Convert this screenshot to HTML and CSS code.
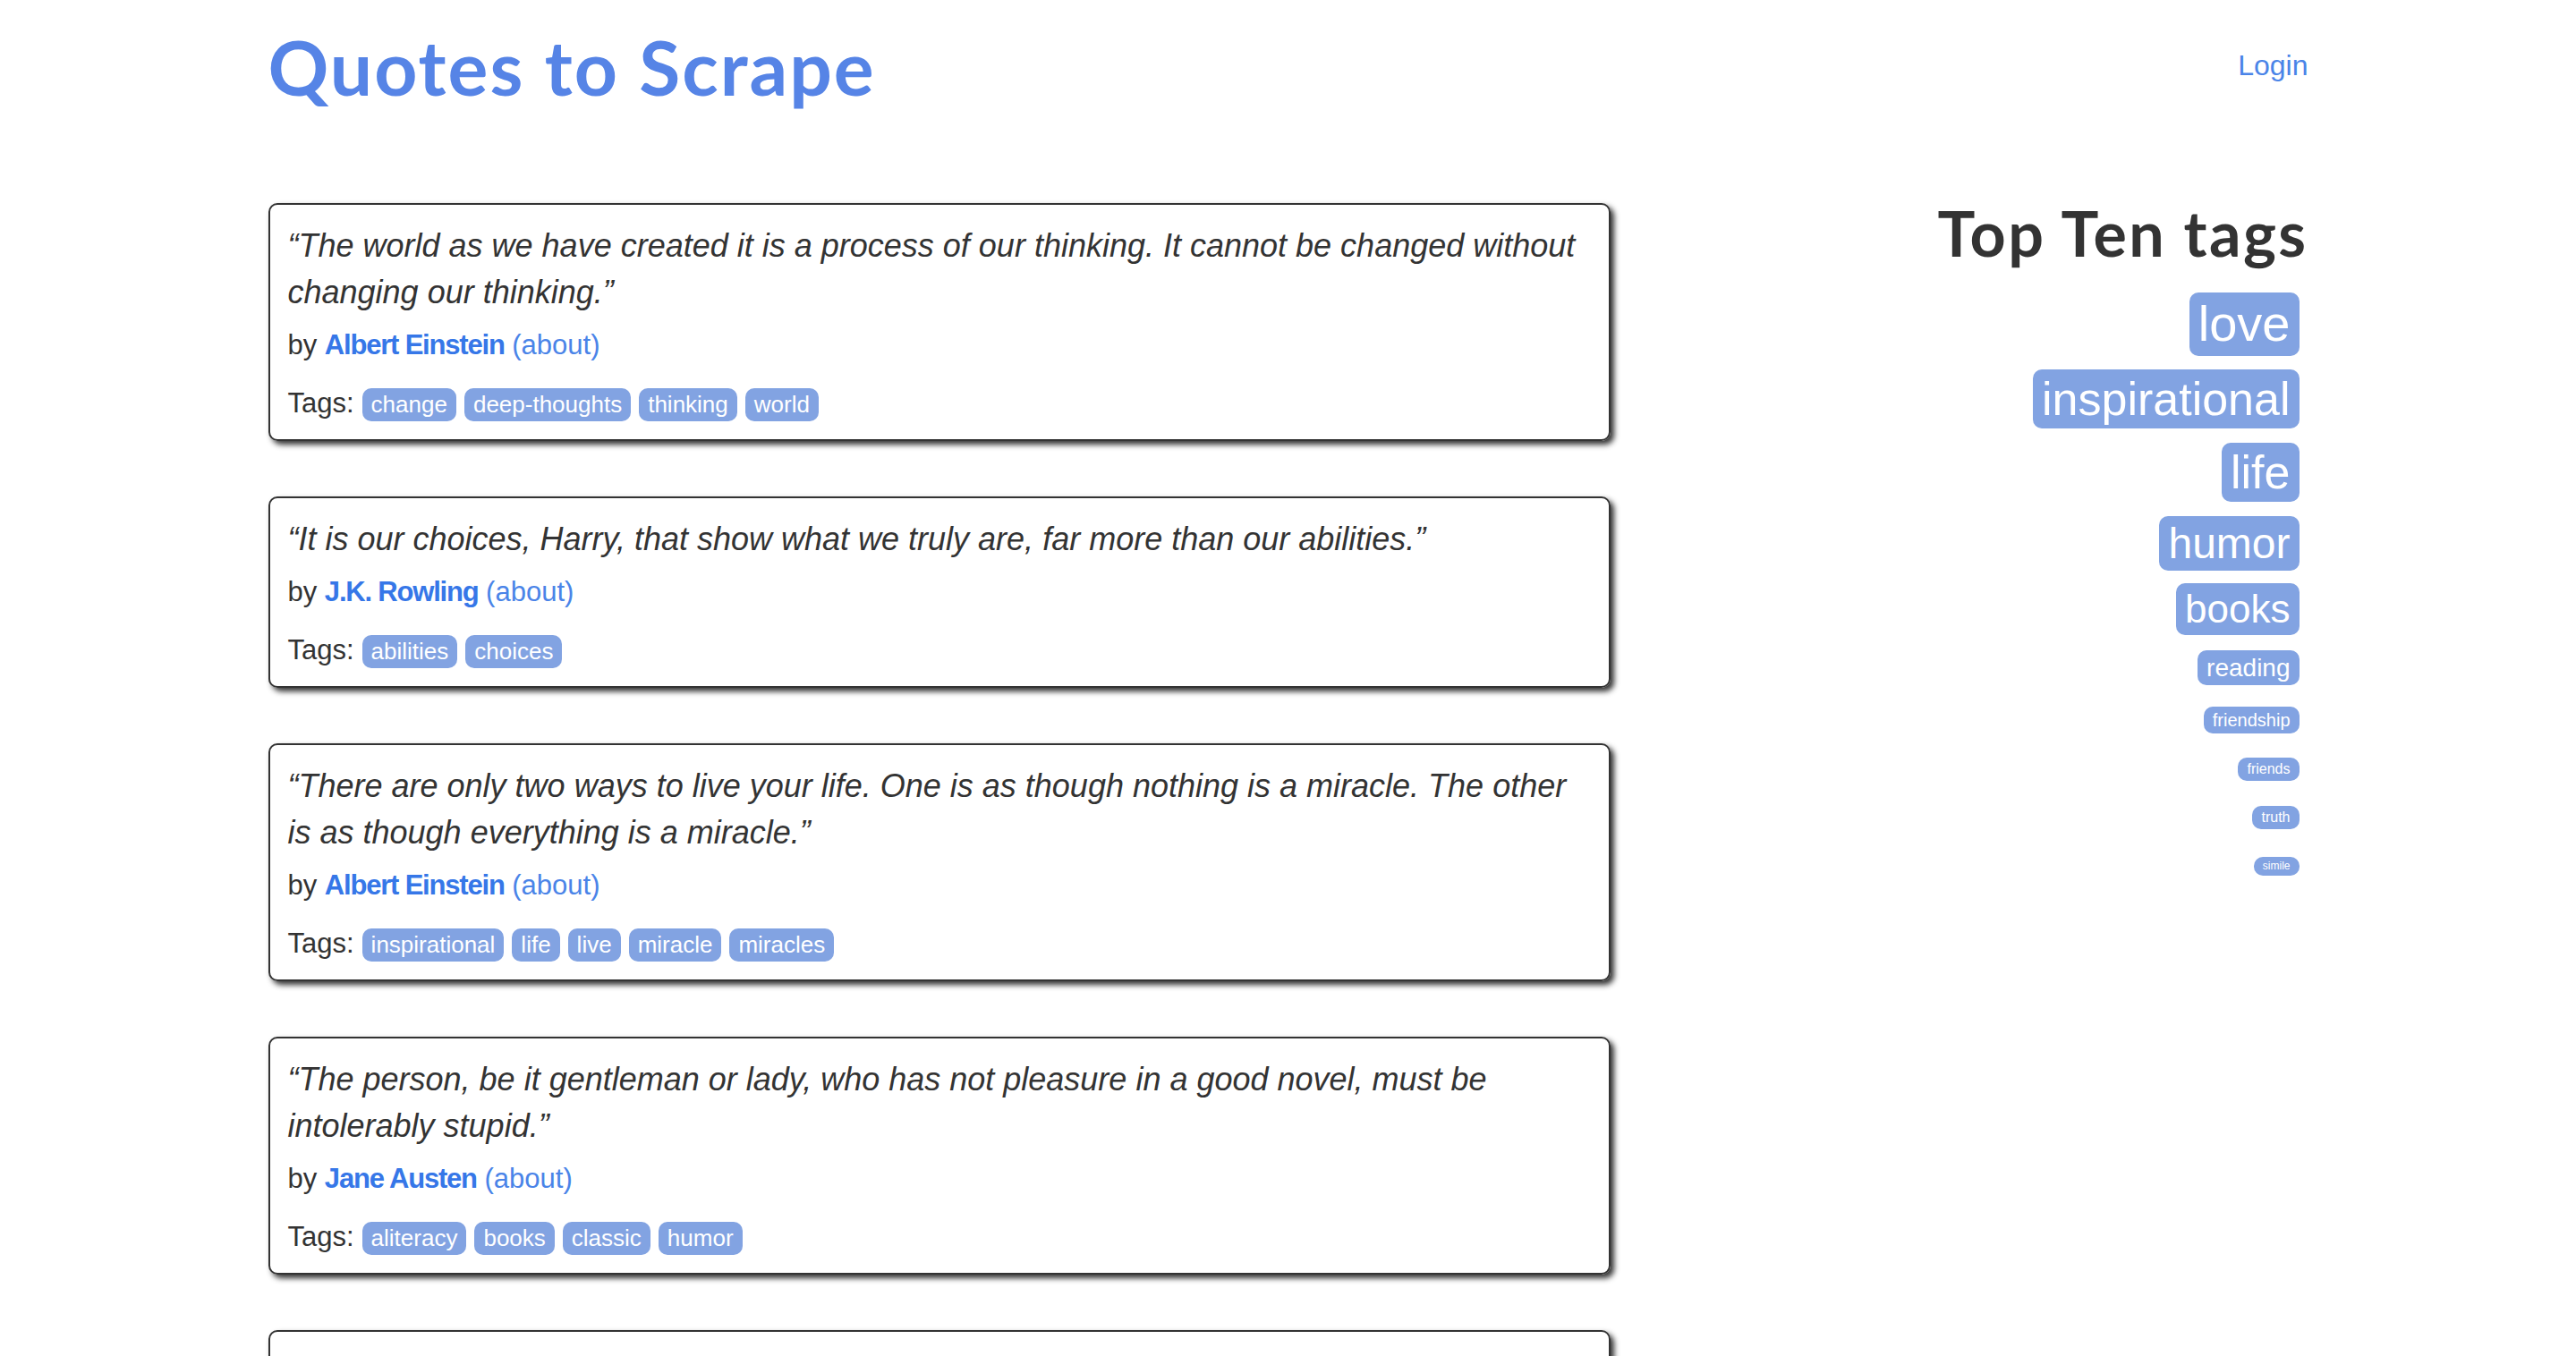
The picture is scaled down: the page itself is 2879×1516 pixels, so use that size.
FILE: index.html
```html
<!DOCTYPE html>
<html lang="en">
<head>
    <meta charset="UTF-8">
    <title>Quotes to Scrape</title>
    <link rel="stylesheet" href="styles.css">
</head>
<body>
    <div class="container">
        <div class="header-box">
            <h1><a href="/">Quotes to Scrape</a></h1>
            <p class="login"><a href="/login">Login</a></p>
        </div>

        <div class="row">
            <div class="quotes">
                <div class="quote">
                    <span class="text">“The world as we have created it is a process of our thinking. It cannot be changed without changing our thinking.”</span>
                    <span class="by">by <span class="author">Albert Einstein</span> <a href="#">(about)</a></span>
                    <div class="tags">
                        Tags:
                        <a class="tag" href="#">change</a>
                        <a class="tag" href="#">deep-thoughts</a>
                        <a class="tag" href="#">thinking</a>
                        <a class="tag" href="#">world</a>
                    </div>
                </div>

                <div class="quote">
                    <span class="text">“It is our choices, Harry, that show what we truly are, far more than our abilities.”</span>
                    <span class="by">by <span class="author">J.K. Rowling</span> <a href="#">(about)</a></span>
                    <div class="tags">
                        Tags:
                        <a class="tag" href="#">abilities</a>
                        <a class="tag" href="#">choices</a>
                    </div>
                </div>

                <div class="quote">
                    <span class="text">“There are only two ways to live your life. One is as though nothing is a miracle. The other is as though everything is a miracle.”</span>
                    <span class="by">by <span class="author">Albert Einstein</span> <a href="#">(about)</a></span>
                    <div class="tags">
                        Tags:
                        <a class="tag" href="#">inspirational</a>
                        <a class="tag" href="#">life</a>
                        <a class="tag" href="#">live</a>
                        <a class="tag" href="#">miracle</a>
                        <a class="tag" href="#">miracles</a>
                    </div>
                </div>

                <div class="quote">
                    <span class="text">“The person, be it gentleman or lady, who has not pleasure in a good novel, must be intolerably stupid.”</span>
                    <span class="by">by <span class="author">Jane Austen</span> <a href="#">(about)</a></span>
                    <div class="tags">
                        Tags:
                        <a class="tag" href="#">aliteracy</a>
                        <a class="tag" href="#">books</a>
                        <a class="tag" href="#">classic</a>
                        <a class="tag" href="#">humor</a>
                    </div>
                </div>

                <div class="quote">
                    <span class="text">“Imperfection is beauty, madness is genius and it's better to be absolutely ridiculous than absolutely boring.”</span>
                    <span class="by">by <span class="author">Marilyn Monroe</span> <a href="#">(about)</a></span>
                    <div class="tags">
                        Tags:
                        <a class="tag" href="#">be-yourself</a>
                        <a class="tag" href="#">inspirational</a>
                    </div>
                </div>
            </div>

            <div class="tags-box">
                <h2>Top Ten tags</h2>
                <span class="tag-item t28"><a class="tag" href="#">love</a></span>
                <span class="tag-item t26"><a class="tag" href="#">inspirational</a></span>
                <span class="tag-item t26"><a class="tag" href="#">life</a></span>
                <span class="tag-item t24"><a class="tag" href="#">humor</a></span>
                <span class="tag-item t22"><a class="tag" href="#">books</a></span>
                <span class="tag-item t14"><a class="tag" href="#">reading</a></span>
                <span class="tag-item t10"><a class="tag" href="#">friendship</a></span>
                <span class="tag-item t8"><a class="tag" href="#">friends</a></span>
                <span class="tag-item t8"><a class="tag" href="#">truth</a></span>
                <span class="tag-item t6"><a class="tag" href="#">simile</a></span>
            </div>
        </div>
    </div>
</body>
</html>
```

FILE: styles.css
```css
* {
    box-sizing: border-box;
}

body {
    margin: 0;
    background: #fff;
    color: #333;
    font-family: 'Liberation Sans', Arial, sans-serif;
    font-size: 31px;
    line-height: 40px;
}

a {
    color: #4a84e8;
    text-decoration: none;
}

.container {
    width: 2280px;
    margin: 0 auto;
}

/* header */

.header-box {
    display: flex;
    justify-content: space-between;
    align-items: flex-start;
    height: 227px;
}

.header-box h1 {
    margin: 29px 0 0;
    font-family: 'Lato', sans-serif;
    font-weight: 700;
    font-size: 84px;
    line-height: 1.1;
    letter-spacing: 2px;
}

.header-box h1 a {
    color: #5684e6;
}

.login {
    margin: 50px 0 0;
    font-size: 32px;
    line-height: 46px;
}

/* quotes */

.row {
    display: flex;
    justify-content: space-between;
}

.quotes {
    width: 1500px;
}

.quote {
    border: 2px solid #333;
    border-radius: 10px;
    box-shadow: 4px 4px 6px #333;
    padding: 20px;
    margin-bottom: 62px;
}

.quote .text {
    display: block;
    font-size: 36px;
    line-height: 52px;
    font-style: italic;
    margin-bottom: 13px;
}

.quote .by {
    display: block;
    margin-bottom: 25px;
}

.author {
    color: #3677e8;
    font-weight: 700;
    letter-spacing: -1.2px;
}

.tags {
    display: flex;
    align-items: baseline;
    gap: 9px;
}

.tag {
    display: inline-block;
    padding: 4px 10px;
    border-radius: 10px;
    background: #82a3e2;
    color: #fff;
    font-size: 26px;
    line-height: 1.12;
}

/* top ten tags */

.tags-box {
    flex: 1;
    display: flex;
    flex-direction: column;
    align-items: stretch;
    text-align: right;
}

.tags-box h2 {
    margin: -5px 0 21px;
    font-family: 'Lato', sans-serif;
    font-weight: 700;
    font-size: 70px;
    line-height: 77px;
    letter-spacing: 2.4px;
    color: #333;
}

.tag-item {
    display: flex;
    justify-content: flex-end;
    align-items: center;
    padding-right: 10px;
}

.t28 { height: 85px; }
.t28 .tag { font-size: 56px; }
.t26 { height: 82px; }
.t26 .tag { font-size: 52px; }
.t24 { height: 77px; }
.t24 .tag { font-size: 48px; }
.t22 { height: 70px; }
.t22 .tag { font-size: 44px; }
.t14 { height: 61px; }
.t14 .tag { font-size: 28px; }
.t10 { height: 56px; }
.t10 .tag { font-size: 20px; }
.t8 { height: 54px; }
.t8 .tag { font-size: 16px; }
.t6 { height: 55px; }
.t6 .tag { font-size: 12px; }
```
